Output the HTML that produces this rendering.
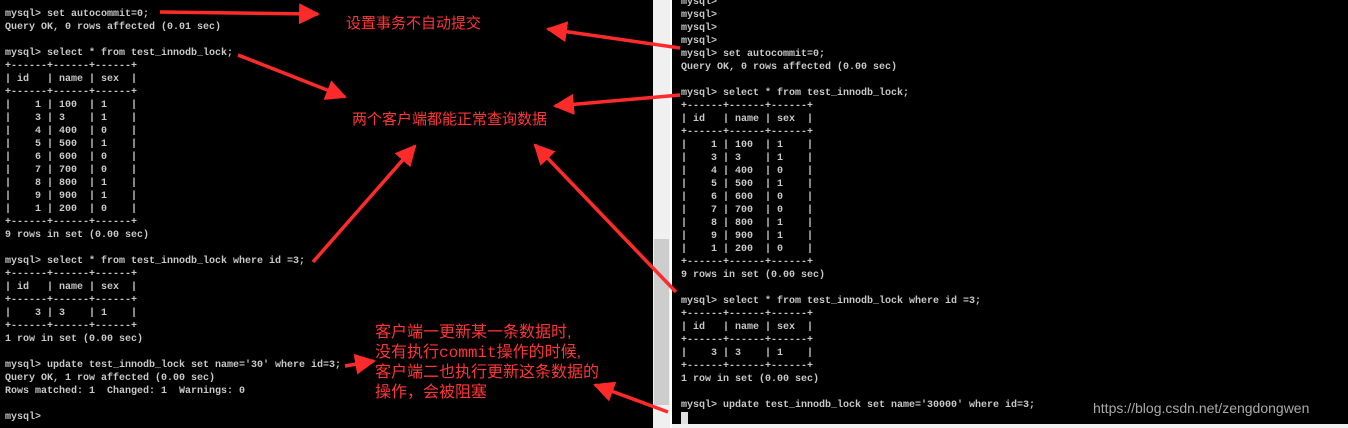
<!DOCTYPE html>
<html><head><meta charset="utf-8"><style>
body{margin:0;width:1348px;height:428px;overflow:hidden;background:#000;position:relative;font-family:"Liberation Mono",monospace}
pre{position:absolute;margin:0;font-family:"Liberation Mono",monospace;font-size:10px;line-height:13px;color:#c8c8c8;font-weight:bold}
.b{color:#c8c8c8}
.ann{position:absolute;color:#ff3535;font-family:"Liberation Sans","Noto Sans CJK SC",sans-serif;font-size:15px;white-space:nowrap}
</style></head><body>
<pre style="left:5px;top:8px">mysql&gt; set autocommit=0;
Query OK, 0 rows affected (0.01 sec)

mysql&gt; select * from test_innodb_lock;
+------+------+------+
| id   | name | sex  |
+------+------+------+
|    1 | 100  | 1    |
|    3 | 3    | 1    |
|    4 | 400  | 0    |
|    5 | 500  | 1    |
|    6 | 600  | 0    |
|    7 | 700  | 0    |
|    8 | 800  | 1    |
|    9 | 900  | 1    |
|    1 | 200  | 0    |
+------+------+------+
9 rows in set (0.00 sec)

mysql&gt; select * from test_innodb_lock where id =3;
+------+------+------+
| id   | name | sex  |
+------+------+------+
|    3 | 3    | 1    |
+------+------+------+
1 row in set (0.00 sec)

mysql&gt; update test_innodb_lock set name='30' where id=3;
Query OK, 1 row affected (0.00 sec)
Rows matched: 1  Changed: 1  Warnings: 0

mysql&gt;</pre>
<div style="position:absolute;left:653px;top:0;width:17px;height:428px;background:#f0f0f0"></div>
<div style="position:absolute;left:654px;top:239px;width:15px;height:166px;background:#cdcdcd"></div>
<div style="position:absolute;left:670px;top:0;width:2px;height:428px;background:#fff"></div>
<pre style="left:681px;top:-4px">mysql&gt;
mysql&gt;
mysql&gt;
mysql&gt;
mysql&gt; set autocommit=0;
Query OK, 0 rows affected (0.00 sec)

mysql&gt; select * from test_innodb_lock;
+------+------+------+
| id   | name | sex  |
+------+------+------+
|    1 | 100  | 1    |
|    3 | 3    | 1    |
|    4 | 400  | 0    |
|    5 | 500  | 1    |
|    6 | 600  | 0    |
|    7 | 700  | 0    |
|    8 | 800  | 1    |
|    9 | 900  | 1    |
|    1 | 200  | 0    |
+------+------+------+
9 rows in set (0.00 sec)

mysql&gt; select * from test_innodb_lock where id =3;
+------+------+------+
| id   | name | sex  |
+------+------+------+
|    3 | 3    | 1    |
+------+------+------+
1 row in set (0.00 sec)

mysql&gt; update test_innodb_lock set name='30000' where id=3;</pre>
<div style="position:absolute;left:681px;top:412px;width:7px;height:12px;background:#e0e0e0"></div>
<div style="position:absolute;left:672px;top:424px;width:676px;height:4px;background:#f0f0f0"></div>
<div style="position:absolute;left:1093px;top:400px;color:#aaa;font-family:'Liberation Sans',sans-serif;font-size:14px">https://blog.csdn.net/zengdongwen</div>

<div class="ann" style="left:346px;top:12px">设置事务不自动提交</div>
<div class="ann" style="left:352px;top:108px">两个客户端都能正常查询数据</div>
<div class="ann" style="left:375px;top:323px;line-height:19.5px;font-size:16px">客户端一更新某一条数据时,<br>没有执行<span style="font-family:'Liberation Mono',monospace">commit</span>操作的时候,<br>客户端二也执行更新这条数据的<br>操作，会被阻塞</div>

<svg width="1348" height="428" style="position:absolute;left:0;top:0">
<defs><marker id="h" viewBox="0 0 10 10" refX="9" refY="5" markerWidth="6" markerHeight="6" orient="auto"><path d="M0 0L10 5L0 10z" fill="#ff2a2a"/></marker></defs>
<g stroke="#ff2a2a" stroke-width="3.5" marker-end="url(#h)" fill="none">
<line x1="160" y1="12" x2="318" y2="14"/>
<line x1="680" y1="48" x2="548" y2="29"/>
<line x1="238" y1="55" x2="345" y2="97"/>
<line x1="680" y1="95" x2="555" y2="106"/>
<line x1="313" y1="262" x2="415" y2="146"/>
<line x1="676" y1="292" x2="535" y2="145"/>
<line x1="345" y1="366" x2="374" y2="361"/>
<line x1="668" y1="412" x2="595" y2="385"/>
</g>
</svg>
</body></html>
